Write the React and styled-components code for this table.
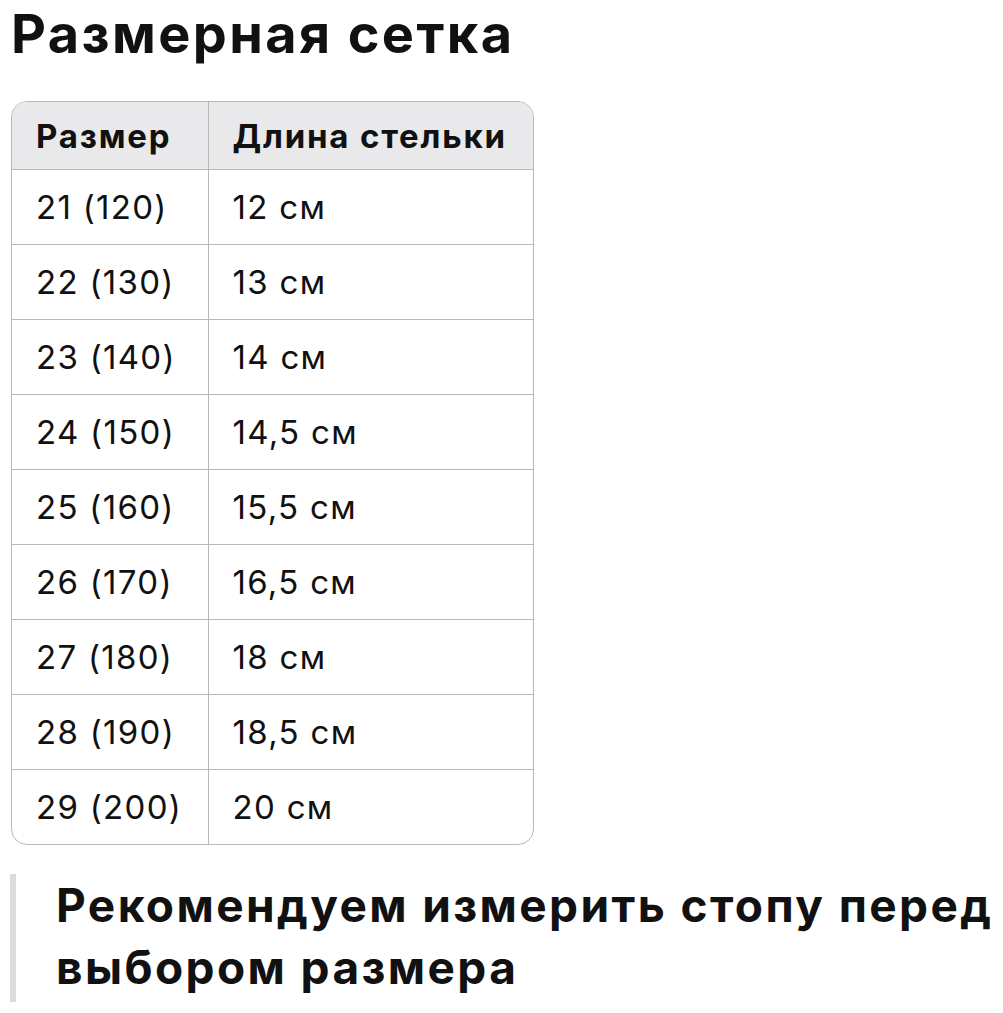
import React from 'react';
import styled, { createGlobalStyle } from 'styled-components';

const GlobalStyle = createGlobalStyle`
  body {
    margin: 0;
    background: #ffffff;
    font-family: Inter, "Noto Sans", sans-serif;
    color: #111111;
  }
`;

const rows = [
  ['21 (120)', '12 см'],
  ['22 (130)', '13 см'],
  ['23 (140)', '14 см'],
  ['24 (150)', '14,5 см'],
  ['25 (160)', '15,5 см'],
  ['26 (170)', '16,5 см'],
  ['27 (180)', '18 см'],
  ['28 (190)', '18,5 см'],
  ['29 (200)', '20 см'],
];

const App = () => {
  return (
    <>
      <GlobalStyle />
      <Page>
        <Title>Размерная сетка</Title>
        <TableWrap>
          <Table>
            <colgroup>
              <col style={{ width: 196 }} />
              <col style={{ width: 325 }} />
            </colgroup>
            <thead>
              <tr>
                <HeadCell>Размер</HeadCell>
                <HeadCell>Длина стельки</HeadCell>
              </tr>
            </thead>
            <tbody>
              {rows.map(([size, length]) => (
                <tr key={size}>
                  <Cell>{size}</Cell>
                  <Cell>{length}</Cell>
                </tr>
              ))}
            </tbody>
          </Table>
        </TableWrap>
        <Quote>Рекомендуем измерить стопу перед выбором размера</Quote>
      </Page>
    </>
  );
};

export default App;

const Page = styled.div`
  padding: 0 4px 0 11px;
`;

const Title = styled.h1`
  margin: 0;
  padding-top: 1px;
  font-size: 54px;
  font-weight: 700;
  line-height: 66px;
  letter-spacing: 2.4px;
`;

const TableWrap = styled.div`
  display: inline-block;
  margin-top: 34px;
  border: 1px solid #b8b8b8;
  border-radius: 16px;
  overflow: hidden;
`;

const Table = styled.table`
  border-collapse: collapse;
  table-layout: fixed;
  font-size: 33px;
  letter-spacing: 1.3px;
`;

const HeadCell = styled.th`
  height: 67px;
  padding: 0 0 0 24px;
  background: #e9e9eb;
  font-weight: 700;
  text-align: left;
  letter-spacing: 1.8px;
  border-bottom: 1px solid #b8b8b8;
  & + & {
    border-left: 1px solid #b8b8b8;
  }
`;

const Cell = styled.td`
  height: 74px;
  padding: 0 0 0 24px;
  text-align: left;
  border-top: 1px solid #b8b8b8;
  tr:first-child > & {
    border-top: none;
  }
  & + & {
    border-left: 1px solid #b8b8b8;
  }
`;

const Quote = styled.blockquote`
  margin: 25px 0 0 -1px;
  padding: 0 0 0 40px;
  border-left: 6px solid #dcdcdc;
  font-size: 46px;
  font-weight: 700;
  line-height: 62px;
  letter-spacing: 2.4px;
  height: 128px;
`;
